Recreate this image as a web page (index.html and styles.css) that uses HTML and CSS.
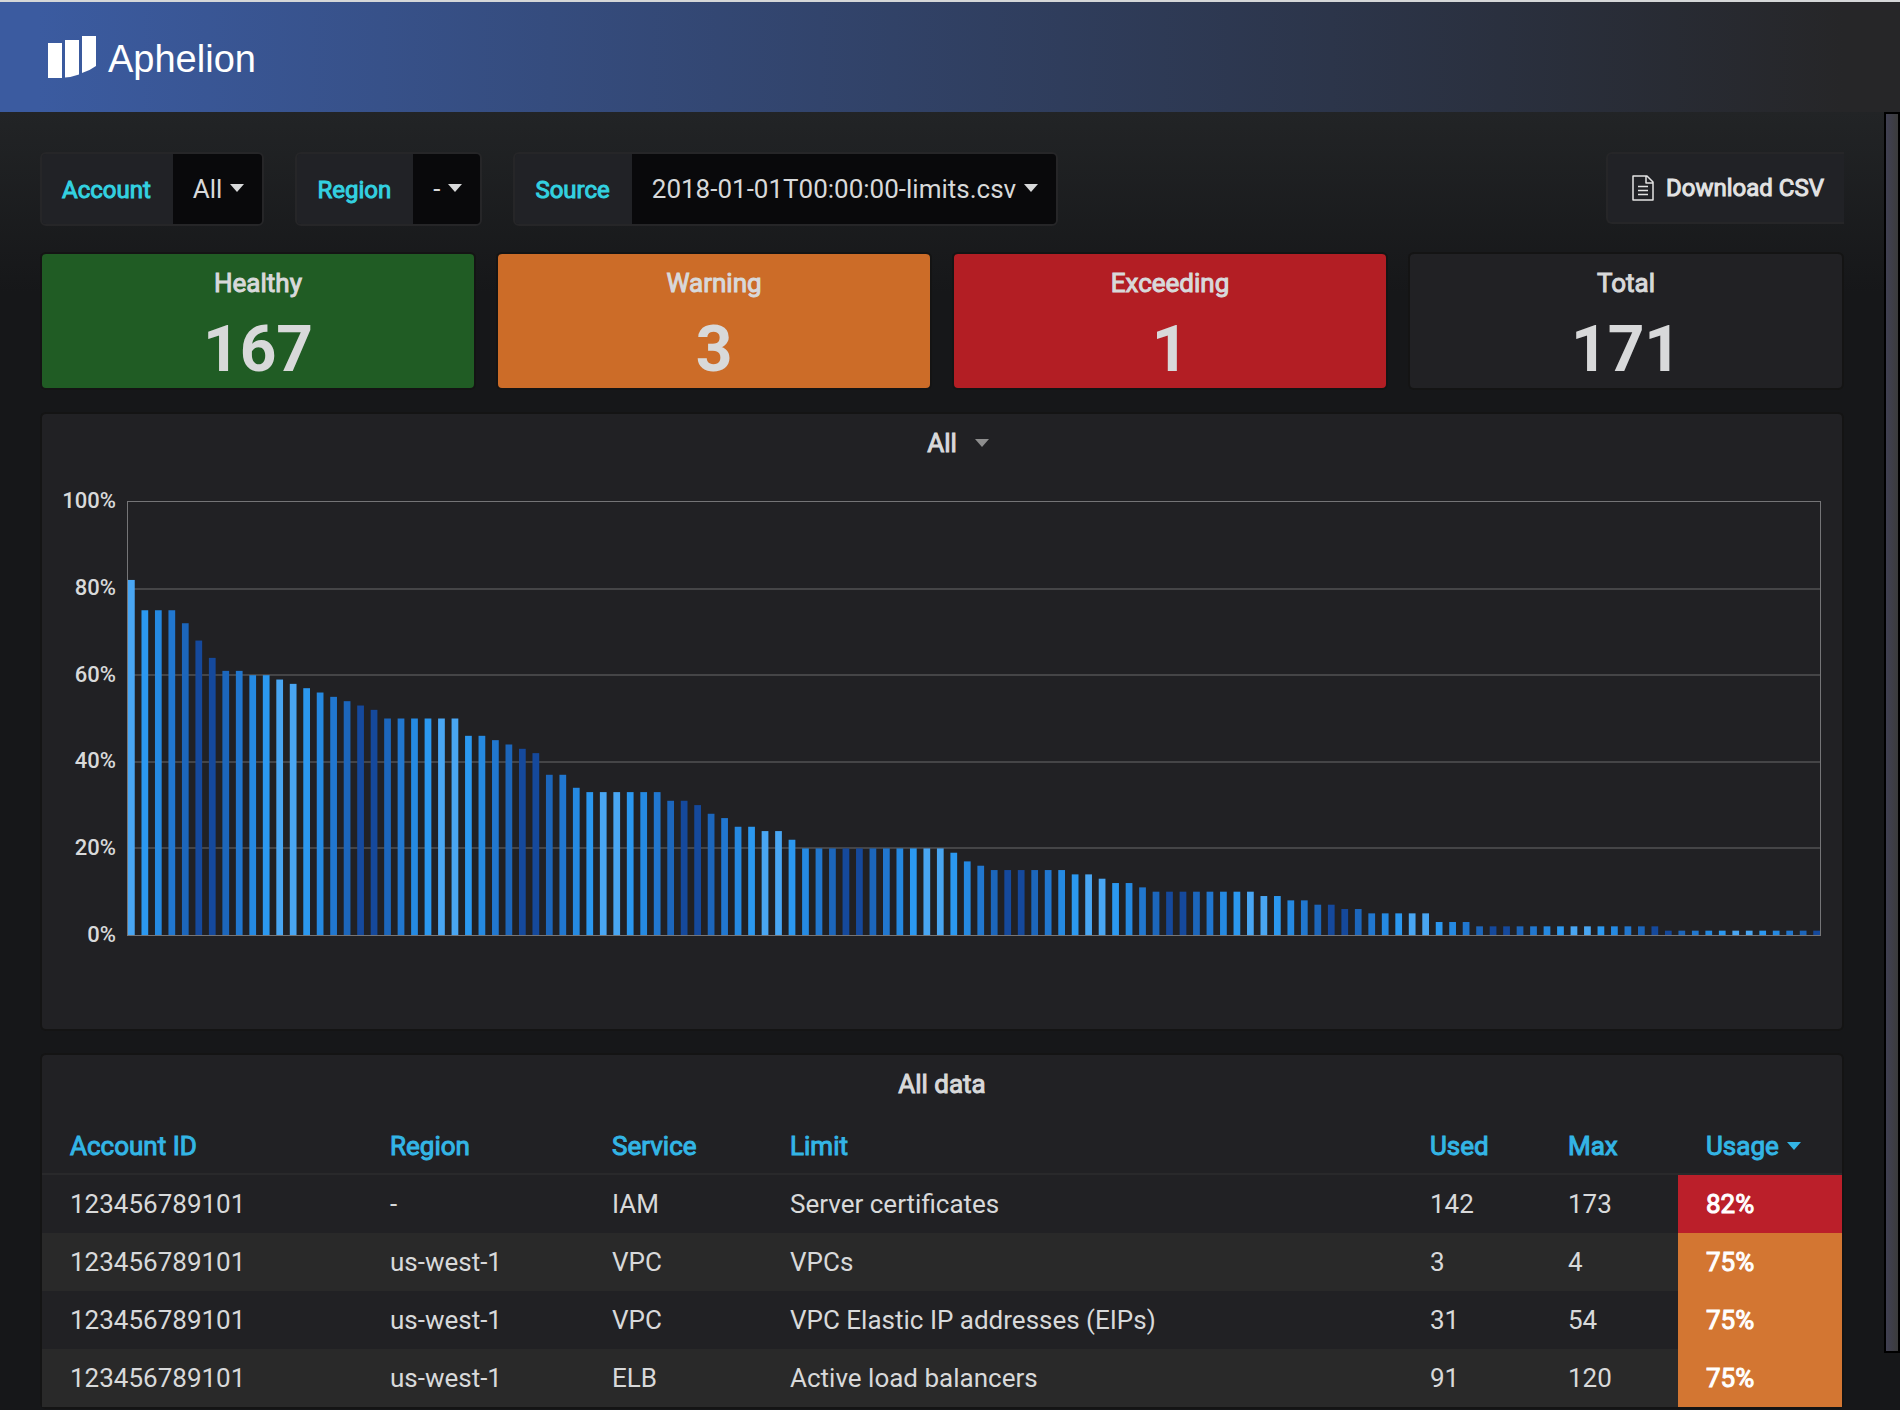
FILE: index.html
```html
<!DOCTYPE html>
<html lang="en">
<head>
<meta charset="utf-8">
<title>Aphelion</title>
<link rel="stylesheet" href="styles.css">
</head>
<body>
<header class="topbar">
  <svg class="logo" viewBox="0 0 48 42" width="48" height="42" aria-hidden="true">
    <path fill="#fff" d="M0 7h14v35H0zM17 4h14v34.500q-7 2.500-14 3zM34 0h14v30q-6 4.500-14 7z"/>
  </svg>
  <span class="brand">Aphelion</span>
</header>
<div class="view">
  <main class="dashboard">
    <div class="controls">
      <div class="filter">
        <label class="filter-label" for="account">Account</label>
        <button class="filter-value" id="account">All<span class="caret"></span></button>
      </div>
      <div class="filter">
        <label class="filter-label" for="region">Region</label>
        <button class="filter-value" id="region">-<span class="caret"></span></button>
      </div>
      <div class="filter">
        <label class="filter-label" for="source">Source</label>
        <button class="filter-value" id="source">2018-01-01T00:00:00-limits.csv<span class="caret"></span></button>
      </div>
      <a class="download" href="#">
        <svg class="file-icon" viewBox="0 0 22 26" width="22" height="26" fill="none" stroke="currentColor" stroke-width="1.500" stroke-linejoin="round" aria-hidden="true">
          <path d="M1 1h14l6 6v18H1zM14 1v7h7M6 11.500h10M6 15.500h10M6 19.500h10"/>
        </svg>
        Download CSV
      </a>
    </div>

    <section class="stats">
      <div class="panel stat stat-ok"><h2 class="panel-title">Healthy</h2><p class="stat-value">167</p></div>
      <div class="panel stat stat-warn"><h2 class="panel-title">Warning</h2><p class="stat-value">3</p></div>
      <div class="panel stat stat-bad"><h2 class="panel-title">Exceeding</h2><p class="stat-value">1</p></div>
      <div class="panel stat"><h2 class="panel-title">Total</h2><p class="stat-value">171</p></div>
    </section>

    <section class="panel chart-panel">
      <h2 class="panel-title chart-title"><span class="chart-name">All</span><span class="caret caret-muted"></span></h2>
      <div class="chart">
        <div class="axis">
          <span>100%</span><span>80%</span><span>60%</span><span>40%</span><span>20%</span><span>0%</span>
        </div>
        <div class="plot">
          <svg class="bars" id="bars" viewBox="0 0 251 100" preserveAspectRatio="none">
            <path class="gridlines" d="M0 20H251M0 40H251M0 60H251M0 80H251"/>
          </svg>
        </div>
      </div>
    </section>

    <section class="panel table-panel">
      <h2 class="panel-title">All data</h2>
      <table class="limits">
        <colgroup>
          <col class="col-account"><col class="col-region"><col class="col-service"><col>
          <col class="col-number"><col class="col-number"><col class="col-usage">
        </colgroup>
        <thead>
          <tr><th>Account ID</th><th>Region</th><th>Service</th><th>Limit</th><th>Used</th><th>Max</th><th>Usage<span class="caret caret-sort"></span></th></tr>
        </thead>
        <tbody>
          <tr><td>123456789101</td><td>-</td><td>IAM</td><td>Server certificates</td><td>142</td><td>173</td><td class="usage usage-bad">82%</td></tr>
          <tr><td>123456789101</td><td>us-west-1</td><td>VPC</td><td>VPCs</td><td>3</td><td>4</td><td class="usage">75%</td></tr>
          <tr><td>123456789101</td><td>us-west-1</td><td>VPC</td><td>VPC Elastic IP addresses (EIPs)</td><td>31</td><td>54</td><td class="usage">75%</td></tr>
          <tr><td>123456789101</td><td>us-west-1</td><td>ELB</td><td>Active load balancers</td><td>91</td><td>120</td><td class="usage">75%</td></tr>
        </tbody>
      </table>
    </section>
  </main>
  <div class="scroll-track"><div class="scroll-thumb"></div></div>
</div>
<script src="chart.js"></script>
</body>
</html>
```
FILE: styles.css
```css
* {
  box-sizing: border-box;
}

body {
  margin: 0;
  height: 100vh;
  overflow: hidden;
  display: flex;
  flex-direction: column;
  background: #161719;
  color: #d8d9da;
  font: 400 26px/36px Roboto, sans-serif;
}

h2,
p {
  margin: 0;
}

.topbar {
  flex: none;
  height: 112px;
  padding: 0 48px;
  display: flex;
  align-items: center;
  gap: 12px;
  border-top: 2px solid #d5d7d8;
  background: linear-gradient(90deg, #3b5ba0 0%, #3b5ba0 2%, #262628 97%);
}

.brand {
  padding-top: 4px;
  color: #fff;
  font: 400 38px/48px "Liberation Sans", Arial, sans-serif;
}

.view {
  flex: 1;
  min-height: 0;
  display: flex;
  background: linear-gradient(180deg, #222426 0, #161719 180px);
}

.dashboard {
  flex: 1;
  min-width: 0;
  padding: 40px 40px 0;
}

.caret {
  display: inline-block;
  margin-left: 8px;
  vertical-align: 6px;
  border: 7px solid transparent;
  border-top: 8px solid currentColor;
  border-bottom: 0;
}

.controls {
  display: flex;
  align-items: flex-start;
  gap: 31px;
  margin-bottom: 26px;
}

.filter {
  display: flex;
  height: 74px;
  border: 2px solid #262628;
  border-radius: 6px;
  overflow: hidden;
}

.filter-label,
.download,
.panel-title,
.limits th,
.limits .usage {
  font-weight: 400;
  -webkit-text-stroke: 1px currentColor;
}

.filter-label {
  padding: 0 22px 0 20px;
  background: #212226;
  color: #33d1e0;
  font-size: 24px;
  line-height: 72px;
}

.filter-value {
  padding: 0 18px 0 20px;
  border: 0;
  background: #09090b;
  color: #d8d9da;
  font: inherit;
}

.download {
  height: 72px;
  margin-left: auto;
  padding: 0 20px 0 24px;
  display: flex;
  align-items: center;
  gap: 12px;
  border: 2px solid #262628;
  border-right: 0;
  border-radius: 6px 0 0 6px;
  background: #212226;
  color: #e3e3e3;
  font-size: 24px;
  text-decoration: none;
}

.stats {
  display: grid;
  grid-template-columns: repeat(4, 1fr);
  gap: 20px;
}

.panel {
  border: 2px solid #141414;
  border-radius: 6px;
  background: #212124;
  margin-bottom: 22px;
}

.panel-title {
  padding-top: 10px;
  font-size: 26px;
  line-height: 38px;
  text-align: center;
}

.stat {
  height: 138px;
}

.stat-ok {
  background: #205c24;
}

.stat-warn {
  background: #cc6c28;
}

.stat-bad {
  background: #b31e24;
}

.stat-value {
  font-size: 64px;
  font-weight: 700;
  line-height: 96px;
  text-align: center;
}

.chart-panel {
  height: 619px;
}

.chart-title {
  display: grid;
  grid-template-columns: 1fr auto 1fr;
  align-items: center;
}

.chart-name {
  grid-column: 2;
}

.caret-muted {
  justify-self: start;
  margin-left: 18px;
  color: #8e8e8e;
}

.chart {
  display: flex;
  gap: 11px;
  padding: 26px 21px 0 20px;
}

.axis {
  width: 54px;
  height: 460px;
  display: flex;
  flex-direction: column;
  justify-content: space-between;
  text-align: right;
  font-size: 22px;
  font-weight: 500;
  line-height: 26px;
}

.plot {
  flex: 1;
  height: 435px;
  margin-top: 13px;
  border: 1px solid #757577;
}

.bars {
  display: block;
  width: 100%;
  height: 100%;
}

.gridlines {
  stroke: #454547;
  stroke-width: 2px;
  vector-effect: non-scaling-stroke;
  shape-rendering: crispEdges;
}

.tone-0 { fill: #49a6f3; }
.tone-1 { fill: #2b98f0; }
.tone-2 { fill: #2589e1; }
.tone-3 { fill: #2177cf; }
.tone-4 { fill: #1c66bb; }
.tone-5 { fill: #15499c; }

.limits {
  width: 100%;
  margin-top: 16px;
  table-layout: fixed;
  border-collapse: separate;
  border-spacing: 0;
  text-align: left;
}

.col-account { width: 320px; }
.col-region { width: 222px; }
.col-service { width: 178px; }
.col-number { width: 138px; }
.col-usage { width: 164px; }

.limits th,
.limits td {
  height: 58px;
  padding: 0 0 0 28px;
  white-space: nowrap;
}

.limits th {
  height: 56px;
  border-bottom: 2px solid #29292b;
  color: #33b5e5;
}

.caret-sort {
  margin-left: 8px;
  vertical-align: 5px;
}

.limits tbody tr:nth-child(even) {
  background: #292929;
}

.limits .usage {
  background: #d37632;
  color: #fff;
}

.limits .usage-bad {
  background: #bb1f2a;
}

.scroll-track {
  flex: none;
  width: 16px;
}

.scroll-thumb {
  height: calc(100% - 57px);
  border: 2px solid #000;
  background: linear-gradient(90deg, #404052, #3c3c3c);
}
```
FILE: chart.js
```js
// Usage percentages as [value, number of limits at that value].
const usage = [
  [82, 1], [75, 3], [72, 1], [68, 1], [64, 1], [61, 2], [60, 2], [59, 1], [58, 1], [57, 1],
  [56, 1], [55, 1], [54, 1], [53, 1], [52, 1], [50, 6], [46, 2], [45, 1], [44, 1], [43, 1],
  [42, 1], [37, 2], [34, 1], [33, 6], [31, 2], [30, 1], [28, 1], [27, 1], [25, 2], [24, 2],
  [22, 1], [20, 11], [19, 1], [17, 1], [16, 1], [15, 6], [14, 2], [13, 1], [12, 2], [11, 1],
  [10, 8], [9, 2], [8, 2], [7, 2], [6, 2], [5, 5], [3, 3], [2, 14], [1, 12]
];
const svg = document.getElementById("bars");
let i = 0;
for (const [value, count] of usage) {
  for (let n = 0; n < count; n++, i++) {
    const bar = document.createElementNS("http://www.w3.org/2000/svg", "rect");
    const step = i % 12;
    bar.setAttribute("x", i * 2);
    bar.setAttribute("y", 100 - value);
    bar.setAttribute("width", 1);
    bar.setAttribute("height", value);
    bar.setAttribute("class", "tone-" + (step < 6 ? step : 11 - step));
    svg.appendChild(bar);
  }
}
```
